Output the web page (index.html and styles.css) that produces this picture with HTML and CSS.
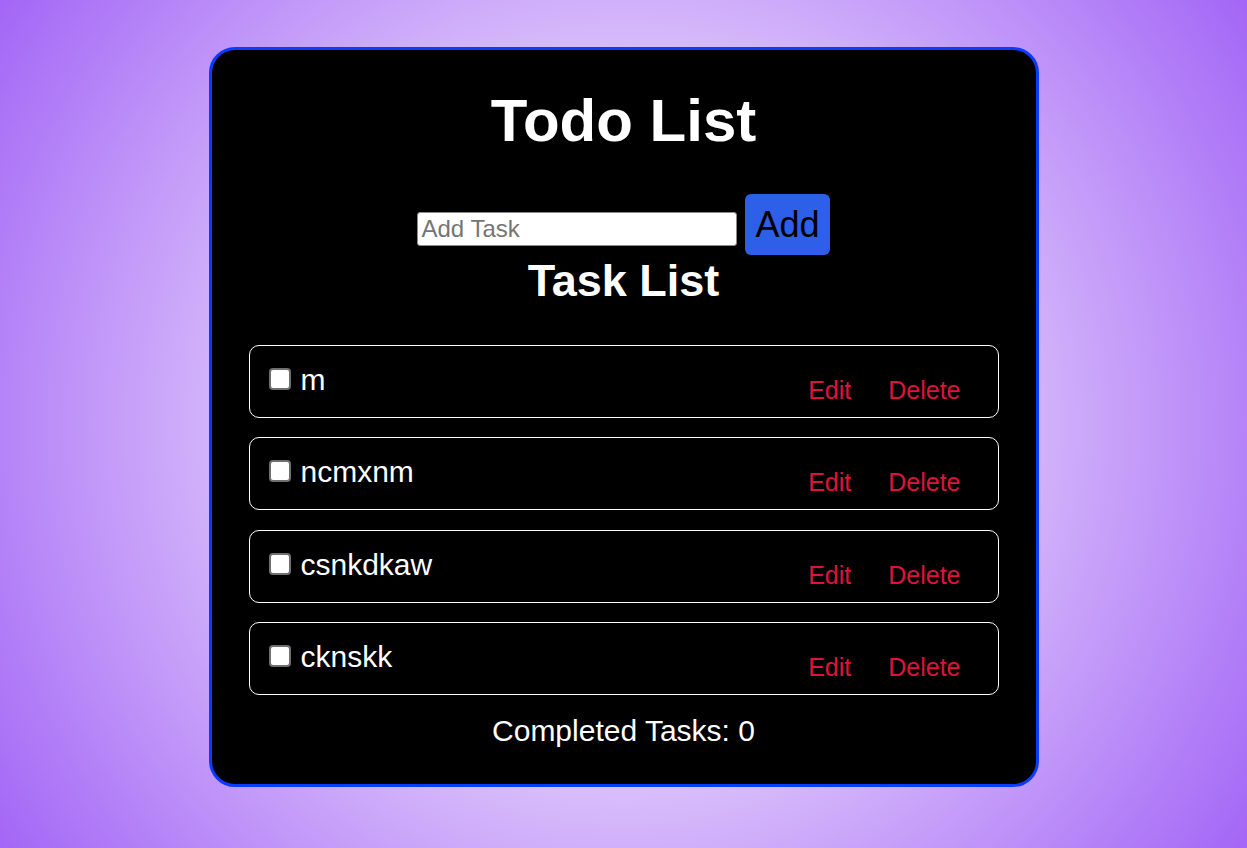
FILE: index.html
```html
<!DOCTYPE html>
<html lang="en">
<head>
<meta charset="utf-8">
<title>Todo List</title>
<link rel="stylesheet" href="styles.css">
</head>
<body>
<main class="card">
  <h1 class="title">Todo List</h1>
  <form class="add-form">
    <input class="add-input" type="text" placeholder="Add Task">
    <button class="add-btn" type="button">Add</button>
  </form>
  <h2 class="subtitle">Task List</h2>
  <ul class="tasks">
    <li class="task">
      <label class="task-label"><input class="task-check" type="checkbox"><span class="task-text">m</span></label>
      <button class="task-btn" type="button">Edit</button>
      <button class="task-btn" type="button">Delete</button>
    </li>
    <li class="task">
      <label class="task-label"><input class="task-check" type="checkbox"><span class="task-text">ncmxnm</span></label>
      <button class="task-btn" type="button">Edit</button>
      <button class="task-btn" type="button">Delete</button>
    </li>
    <li class="task">
      <label class="task-label"><input class="task-check" type="checkbox"><span class="task-text">csnkdkaw</span></label>
      <button class="task-btn" type="button">Edit</button>
      <button class="task-btn" type="button">Delete</button>
    </li>
    <li class="task">
      <label class="task-label"><input class="task-check" type="checkbox"><span class="task-text">cknskk</span></label>
      <button class="task-btn" type="button">Edit</button>
      <button class="task-btn" type="button">Delete</button>
    </li>
  </ul>
  <p class="completed">Completed Tasks: 0</p>
</main>
</body>
</html>
```

FILE: styles.css
```css
html, body {
  margin: 0;
  padding: 0;
}

body {
  min-height: 848px;
  font-family: "Liberation Sans", Arial, sans-serif;
  background: radial-gradient(circle at 50% 50%, #dcc3fb 0%, #dcc3fb 45%, #a366f6 100%);
  padding-top: 47px;
  box-sizing: border-box;
}

.card {
  box-sizing: border-box;
  width: 830px;
  margin: 0 auto;
  background: #000;
  border: 3px solid #0a3cff;
  border-radius: 26px;
  padding: 36px 37px 36px;
  color: #fff;
  text-align: center;
}

.title {
  margin: 0;
  font-size: 60px;
  line-height: 1.15;
  font-weight: bold;
}

.add-form {
  margin: 39px 0 0;
  display: flex;
  justify-content: center;
  align-items: baseline;
  gap: 8px;
}

.add-input {
  box-sizing: border-box;
  width: 320px;
  font-family: "Liberation Sans", Arial, sans-serif;
  font-size: 24px;
  line-height: 1.15;
  padding: 2px 3px;
  border: 1px solid #8a8a8a;
  border-radius: 3px;
  background: #fff;
  color: #000;
}

.add-input::placeholder {
  color: #757575;
}

.add-btn {
  font-family: "Liberation Sans", Arial, sans-serif;
  font-size: 36px;
  line-height: 1.15;
  padding: 10px 10px;
  border: none;
  border-radius: 6px;
  background: #2e5fe8;
  color: #000;
}

.subtitle {
  margin: 0;
  font-size: 45px;
  line-height: 1.15;
  font-weight: bold;
}

.tasks {
  list-style: none;
  margin: 38px 0 0;
  padding: 0;
  display: flex;
  flex-direction: column;
  gap: 19.33px;
}

.task {
  box-sizing: border-box;
  height: 73px;
  border: 1px solid #fff;
  border-radius: 10px;
  padding: 17px 37px 0 19px;
  display: flex;
  align-items: flex-start;
  text-align: left;
}

.task-label {
  flex: 1;
  display: flex;
  align-items: flex-start;
  gap: 10px;
}

.task-check {
  appearance: none;
  -webkit-appearance: none;
  box-sizing: border-box;
  width: 22px;
  height: 22px;
  margin: 5px 0 0;
  background: #fff;
  border: 2px solid #6f6f6f;
  border-radius: 4px;
}

.task-text {
  font-size: 30px;
  line-height: 1.15;
}

.task-btn {
  font-family: "Liberation Sans", Arial, sans-serif;
  font-size: 25px;
  line-height: 1.15;
  padding: 0;
  margin: 13px 0 0 37px;
  border: none;
  background: none;
  color: #dc143c;
}

.completed {
  margin: 18.5px 0 0;
  font-size: 30px;
  line-height: 1.15;
}
```
